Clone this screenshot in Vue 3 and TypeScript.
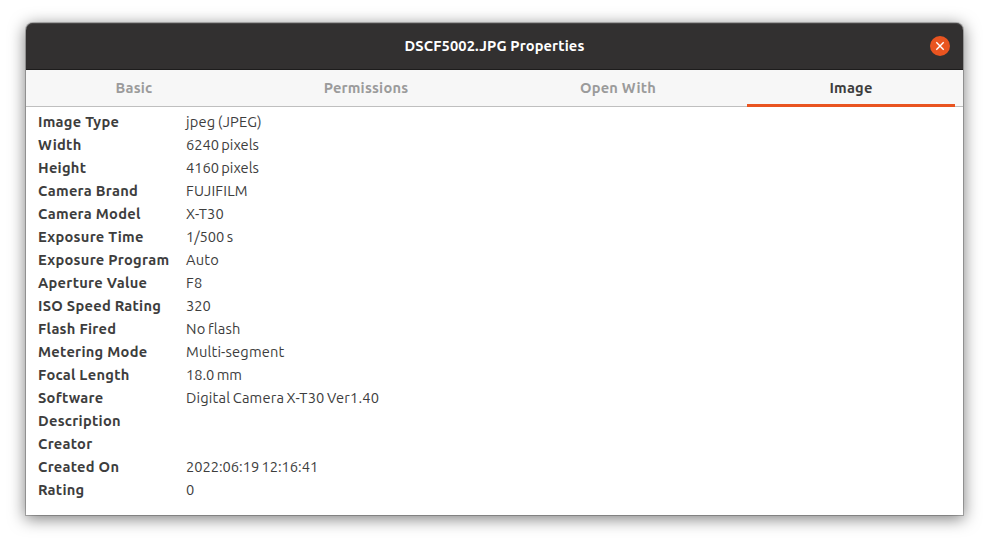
<script setup lang="ts">
interface Property {
  label: string
  value: string
}

const tabs: string[] = ['Basic', 'Permissions', 'Open With', 'Image']
const activeTab = 'Image'

const properties: Property[] = [
  { label: 'Image Type', value: 'jpeg (JPEG)' },
  { label: 'Width', value: '6240 pixels' },
  { label: 'Height', value: '4160 pixels' },
  { label: 'Camera Brand', value: 'FUJIFILM' },
  { label: 'Camera Model', value: 'X-T30' },
  { label: 'Exposure Time', value: '1/500 s' },
  { label: 'Exposure Program', value: 'Auto' },
  { label: 'Aperture Value', value: 'F8' },
  { label: 'ISO Speed Rating', value: '320' },
  { label: 'Flash Fired', value: 'No flash' },
  { label: 'Metering Mode', value: 'Multi-segment' },
  { label: 'Focal Length', value: '18.0 mm' },
  { label: 'Software', value: 'Digital Camera X-T30 Ver1.40' },
  { label: 'Description', value: '' },
  { label: 'Creator', value: '' },
  { label: 'Created On', value: '2022:06:19 12:16:41' },
  { label: 'Rating', value: '0' },
]

const isNumeric = (value: string): boolean => /^\d/.test(value)
</script>

<template>
  <div class="desktop">
    <section class="window">
      <header class="titlebar">
        <span></span>
        <h1 class="title">DSCF5002.JPG Properties</h1>
        <button class="close" aria-label="Close">
          <svg width="20" height="20" viewBox="0 0 20 20">
            <path d="M6.3 6.3 L13.7 13.7 M13.7 6.3 L6.3 13.7" />
          </svg>
        </button>
      </header>
      <nav class="tabs">
        <div v-for="tab in tabs" :key="tab" class="tab" :class="{ active: tab === activeTab }">{{ tab }}</div>
      </nav>
      <dl class="properties">
        <template v-for="item in properties" :key="item.label">
          <dt>{{ item.label }}</dt>
          <dd :class="{ numeric: isNumeric(item.value) }">{{ item.value }}</dd>
        </template>
      </dl>
    </section>
  </div>
</template>

<style>
body {
  background: #fff;
}
</style>

<style scoped>
.desktop {
  box-sizing: border-box;
  height: 544px;
  padding: 23px 26px 29px;
  overflow: hidden;
  font-family: Ubuntu, "Noto Sans", sans-serif;
  font-size: 14.667px;
  color: #3d3d3d;
}
.window {
  height: 492px;
  width: 937px;
  background: #fff;
  border-radius: 7px 7px 0 0;
  box-shadow: 0 0 0 1px rgba(0, 0, 0, 0.23), 0 3px 16px 1px rgba(0, 0, 0, 0.5);
}
.titlebar {
  box-sizing: border-box;
  display: grid;
  grid-template-columns: 33px 1fr 33px;
  align-items: center;
  height: 47px;
  background: #323030;
  border-bottom: 1px solid #1d1c1c;
  border-radius: 7px 7px 0 0;
  box-shadow: inset 0 1px #474545;
}
.title {
  margin: 0;
  text-align: center;
  font-size: 14.667px;
  line-height: 20px;
  font-weight: 700;
  letter-spacing: 0.11px;
  color: #fff;
}
.close {
  width: 20px;
  height: 20px;
  padding: 0;
  border: 0;
  border-radius: 50%;
  background: #e95420;
}
.close svg {
  display: block;
  fill: none;
  stroke: #fff;
  stroke-width: 1.4;
}
.tabs {
  box-sizing: border-box;
  display: grid;
  grid-template-columns: 200px 264px 240px 208px;
  height: 37px;
  padding: 0 8px;
  background: #f7f7f7;
  box-shadow: inset 0 -1px #bfbfbf;
}
.tab {
  box-sizing: border-box;
  height: 37px;
  line-height: 35px;
  text-align: center;
  font-weight: 700;
  letter-spacing: 0.2px;
  color: #9b9b9b;
}
.tab.active {
  margin-left: 9px;
  width: 208px;
  color: #3d3d3d;
  box-shadow: inset 0 -3px #e95420;
}
.properties {
  display: grid;
  grid-template-columns: 148px 1fr;
  grid-auto-rows: 23px;
  margin: 0;
  padding: 4px 12px 0;
  line-height: 21px;
  white-space: nowrap;
}
dt {
  font-weight: 700;
  letter-spacing: 0.27px;
}
dd {
  margin: 0;
  letter-spacing: 0.17px;
  word-spacing: -1px;
}
dd.numeric {
  letter-spacing: -0.02px;
}
</style>
